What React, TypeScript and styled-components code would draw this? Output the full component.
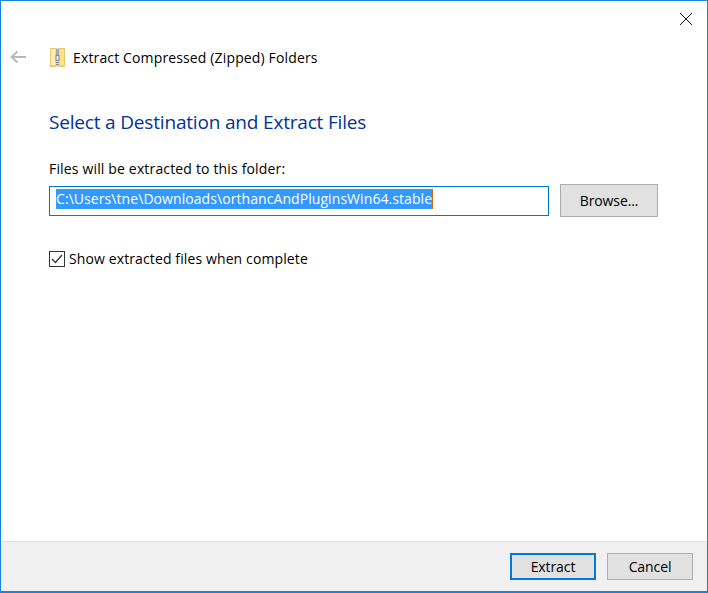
import React from 'react';
import styled, { createGlobalStyle } from 'styled-components';

const GlobalStyle = createGlobalStyle`
  html, body {
    margin: 0;
    padding: 0;
    background: #fff;
  }
`;

const Window = styled.div`
  box-sizing: border-box;
  width: 708px;
  height: 593px;
  display: flex;
  flex-direction: column;
  border: 1px solid #1883d7;
  border-bottom-width: 2px;
  background: #fff;
  color: #000;
  font-family: "Open Sans", "Noto Sans", sans-serif;
  font-size: 14px;
`;

const TitleBar = styled.div`
  height: 36px;
  display: flex;
  justify-content: flex-end;
  align-items: center;
  padding-right: 14px;
`;

const Nav = styled.div`
  height: 40px;
  display: flex;
  align-items: center;
  padding-left: 9px;
`;

const BackArrow = styled.svg`
  width: 17px;
  height: 14px;
  margin-right: 23px;
`;

const ZipIcon = styled.svg`
  width: 15px;
  height: 19px;
  margin-right: 8px;
`;

const NavTitle = styled.span`
  font-size: 14px;
  letter-spacing: 0.14px;
  white-space: nowrap;
`;

const Content = styled.div`
  flex: 1;
  display: flex;
  flex-direction: column;
  padding: 31px 49px 0 48px;
`;

const Heading = styled.h1`
  margin: 0 0 23px;
  font-size: 19px;
  line-height: 28px;
  font-weight: 400;
  color: #003399;
  letter-spacing: -0.18px;
`;

const FieldLabel = styled.label`
  display: block;
  font-size: 14px;
  line-height: 20px;
  letter-spacing: 0.16px;
  margin-bottom: 5px;
`;

const PathRow = styled.div`
  display: flex;
  align-items: center;
  gap: 11px;
`;

const PathBox = styled.div`
  box-sizing: border-box;
  width: 501px;
  height: 30px;
  display: flex;
  align-items: center;
  border: 1px solid #0078d7;
  padding: 0 0 3px 6px;
`;

const Selection = styled.span`
  background: #3399ff;
  color: #fff;
  font-size: 14px;
  line-height: 20px;
  letter-spacing: 0.07px;
  white-space: nowrap;
  border-right: 1px solid #d46a00;
`;

const Button = styled.button<{ $primary?: boolean; $width: number; $height: number }>`
  box-sizing: border-box;
  width: ${({ $width }) => $width}px;
  height: ${({ $height }) => $height}px;
  padding: 0;
  background: #e1e1e1;
  border: ${({ $primary }) => ($primary ? '2px solid #0078d7' : '1px solid #adadad')};
  color: #000;
  font-family: inherit;
  font-size: 14px;
  letter-spacing: -0.1px;
`;

const CheckRow = styled.div`
  display: flex;
  align-items: center;
  margin-top: 32px;
`;

const CheckBox = styled.span`
  box-sizing: border-box;
  width: 16px;
  height: 16px;
  display: flex;
  align-items: center;
  justify-content: center;
  border: 1px solid #333;
  margin-right: 4px;
`;

const CheckLabel = styled.span`
  font-size: 14px;
  line-height: 20px;
  letter-spacing: 0.115px;
`;

const Footer = styled.div`
  height: 50px;
  display: flex;
  justify-content: flex-end;
  align-items: flex-start;
  gap: 11px;
  padding: 11px 14px 0 0;
  box-sizing: border-box;
  background: #f0f0f0;
  border-top: 1px solid #dfdfdf;
`;

export default function App(): React.ReactElement {
  return (
    <>
      <GlobalStyle />
      <Window>
        <TitleBar>
          <svg width='14' height='14' viewBox='0 0 14 14'>
            <path d='M1 1 L13 13 M13 1 L1 13' stroke='#111' strokeWidth='1' fill='none' />
          </svg>
        </TitleBar>
        <Nav>
          <BackArrow viewBox='0 0 17 14'>
            <path d='M1.5 7 H16 M7.5 1.5 L1.5 7 L7.5 12.5' stroke='#b9b9b9' strokeWidth='2' fill='none' />
          </BackArrow>
          <ZipIcon viewBox='0 0 15 19'>
            <path d='M0.5 0.5 H14.5 V18.5 H0.5 Z' fill='#fde08a' stroke='#eac766' />
            <rect x='1' y='1' width='4' height='17' fill='#fff0b8' />
            <rect x='1' y='17' width='13' height='1' fill='#f3cf68' />
            <rect x='5.5' y='0' width='4' height='19' fill='#d6d6d6' />
            <path d='M6 2 H9 M6 4 H9 M6 6 H9' stroke='#7a7a7a' strokeWidth='1' />
            <rect x='5.5' y='7' width='4' height='6' fill='#8a8a8a' />
            <rect x='6.5' y='8' width='2' height='4' fill='#e8e8e8' />
            <path d='M6 14.5 H9 M6 16.5 H9' stroke='#8a8a8a' strokeWidth='1' />
          </ZipIcon>
          <NavTitle>Extract Compressed (Zipped) Folders</NavTitle>
        </Nav>
        <Content>
          <Heading>Select a Destination and Extract Files</Heading>
          <FieldLabel>Files will be extracted to this folder:</FieldLabel>
          <PathRow>
            <PathBox>
              <Selection>C:\Users\tne\Downloads\orthancAndPluginsWin64.stable</Selection>
            </PathBox>
            <Button $width={98} $height={33}>Browse...</Button>
          </PathRow>
          <CheckRow>
            <CheckBox>
              <svg width='12' height='10' viewBox='0 0 12 10'>
                <path d='M1 5 L4.5 8.5 L11 1' stroke='#333' strokeWidth='1.3' fill='none' />
              </svg>
            </CheckBox>
            <CheckLabel>Show extracted files when complete</CheckLabel>
          </CheckRow>
        </Content>
        <Footer>
          <Button $primary $width={86} $height={27}>Extract</Button>
          <Button $width={86} $height={27}>Cancel</Button>
        </Footer>
      </Window>
    </>
  );
}
